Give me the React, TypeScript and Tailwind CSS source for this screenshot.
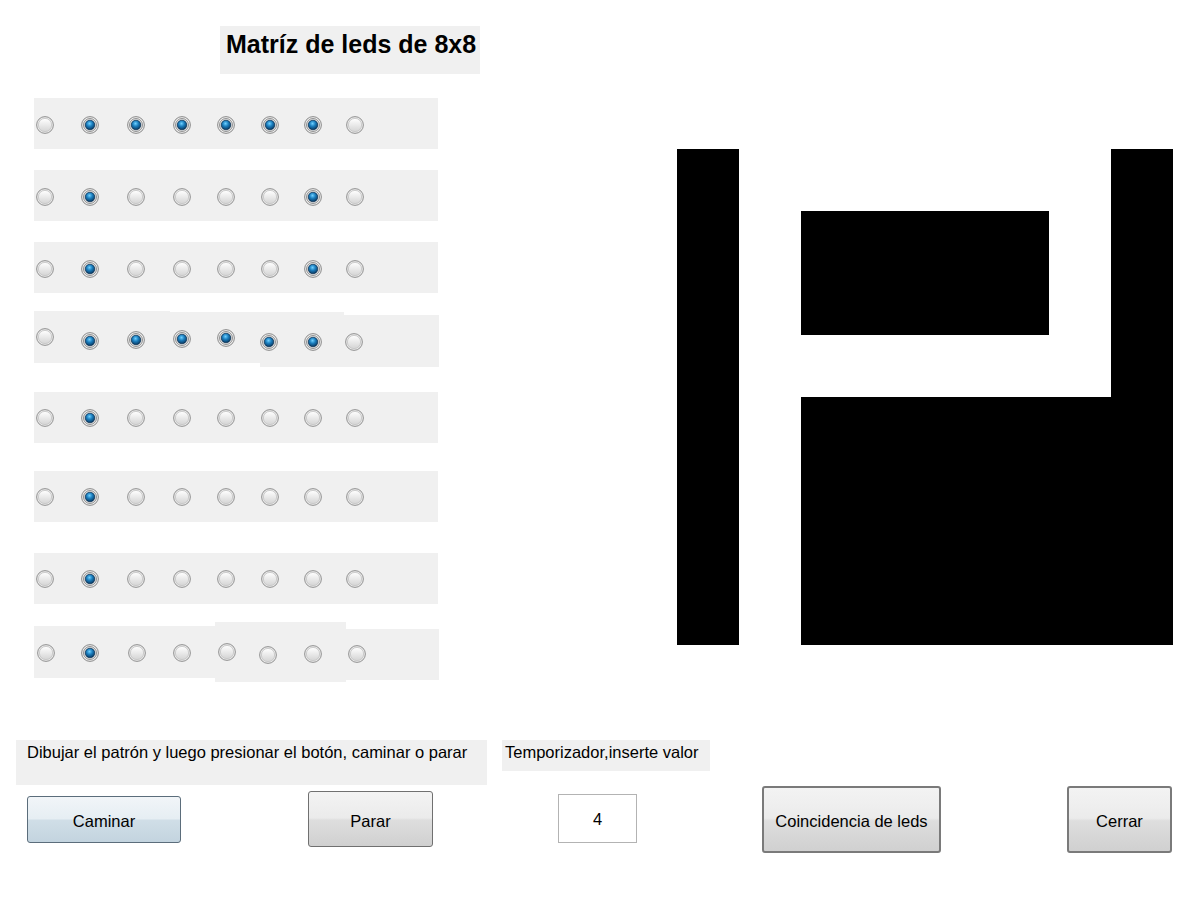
type Item = { on: boolean; cls: string }
type Seg = { cls: string; items: Item[] }
type RowDef = { cls: string; segs: Seg[] }

const stdMl = ["ml-[2px]", "ml-[27px]", "ml-[28px]", "ml-[28px]", "ml-[26px]", "ml-[26px]", "ml-[25px]", "ml-[24px]"]

const stdRow = (cls: string, pad: string, states: number[]): RowDef => ({
  cls,
  segs: [
    {
      cls: "w-[404px] h-[51px] " + pad,
      items: states.map((s, i) => ({ on: s === 1, cls: stdMl[i] })),
    },
  ],
})

const rows: RowDef[] = [
  stdRow("mt-[24px]", "pt-[18px]", [0, 1, 1, 1, 1, 1, 1, 0]),
  stdRow("mt-[21px]", "pt-[18px]", [0, 1, 0, 0, 0, 0, 1, 0]),
  stdRow("mt-[21px]", "pt-[18px]", [0, 1, 0, 0, 0, 0, 1, 0]),
  {
    cls: "mt-[18px]",
    segs: [
      {
        cls: "w-[136px] h-[52px]",
        items: [
          { on: false, cls: "ml-[2px] mt-[17px]" },
          { on: true, cls: "ml-[27px] mt-[21px]" },
          { on: true, cls: "ml-[28px] mt-[20px]" },
        ],
      },
      {
        cls: "w-[90px] h-[51px] mt-[1px]",
        items: [
          { on: true, cls: "ml-[3px] mt-[18px]" },
          { on: true, cls: "ml-[26px] mt-[17px]" },
        ],
      },
      {
        cls: "w-[84px] h-[55px] mt-[1px]",
        items: [
          { on: true, cls: "ml-0 mt-[21px]" },
          { on: true, cls: "ml-[26px] mt-[21px]" },
        ],
      },
      {
        cls: "w-[95px] h-[52px] mt-[4px]",
        items: [{ on: false, cls: "ml-[1px] mt-[18px]" }],
      },
    ],
  },
  stdRow("mt-[25px]", "pt-[17px]", [0, 1, 0, 0, 0, 0, 0, 0]),
  stdRow("mt-[28px]", "pt-[17px]", [0, 1, 0, 0, 0, 0, 0, 0]),
  stdRow("mt-[31px]", "pt-[17px]", [0, 1, 0, 0, 0, 0, 0, 0]),
  {
    cls: "mt-[18px]",
    segs: [
      {
        cls: "w-[181px] h-[52px] mt-[4px]",
        items: [
          { on: false, cls: "ml-[3px] mt-[18px]" },
          { on: true, cls: "ml-[26px] mt-[18px]" },
          { on: false, cls: "ml-[29px] mt-[18px]" },
          { on: false, cls: "ml-[27px] mt-[18px]" },
        ],
      },
      {
        cls: "w-[131px] h-[60px]",
        items: [
          { on: false, cls: "ml-[3px] mt-[21px]" },
          { on: false, cls: "ml-[23px] mt-[24px]" },
          { on: false, cls: "ml-[27px] mt-[23px]" },
        ],
      },
      {
        cls: "w-[93px] h-[51px] mt-[7px]",
        items: [{ on: false, cls: "ml-[2px] mt-[16px]" }],
      },
    ],
  },
]

// patrón que se ve en la matriz de la derecha
const pattern = [
  [1, 0, 0, 0, 0, 0, 0, 1],
  [1, 0, 1, 1, 1, 1, 0, 1],
  [1, 0, 1, 1, 1, 1, 0, 1],
  [1, 0, 0, 0, 0, 0, 0, 1],
  [1, 0, 1, 1, 1, 1, 1, 1],
  [1, 0, 1, 1, 1, 1, 1, 1],
  [1, 0, 1, 1, 1, 1, 1, 1],
  [1, 0, 1, 1, 1, 1, 1, 1],
]

const Radio = ({ on, className }: { on: boolean; className: string }) => (
  <svg width="18" height="18" viewBox="0 0 18 18" className={"shrink-0 " + className}>
    <defs>
      <linearGradient id="rOff" x1="0" y1="0" x2="0" y2="1">
        <stop offset="0" stopColor="#ffffff" />
        <stop offset="1" stopColor="#d4d4d4" />
      </linearGradient>
      <radialGradient id="rOn" cx="0.45" cy="0.35" r="0.65">
        <stop offset="0" stopColor="#6fd0ff" />
        <stop offset="0.45" stopColor="#1b7fbf" />
        <stop offset="1" stopColor="#08365e" />
      </radialGradient>
    </defs>
    {on ? (
      <>
        <circle cx="9" cy="9" r="8.4" fill="#eaeaea" stroke="#8c8c8c" strokeWidth="1" />
        <circle cx="9" cy="9" r="6.4" fill="#f5f5f5" stroke="#7a7a7a" strokeWidth="0.9" />
        <circle cx="9" cy="9" r="4.8" fill="url(#rOn)" stroke="#062a4a" strokeWidth="0.7" />
      </>
    ) : (
      <>
        <circle cx="9" cy="9" r="8.4" fill="#e6e6e6" stroke="#949494" strokeWidth="1" />
        <circle cx="9" cy="9" r="6.6" fill="url(#rOff)" stroke="#c4c4c4" strokeWidth="0.8" />
      </>
    )}
  </svg>
)

const App = () => {
  return (
    <div className="w-[1200px] h-[900px] bg-white text-black overflow-hidden font-['Liberation_Sans',Arial,sans-serif]">
      <div className="flex items-start">
        {/* columna izquierda: título y radios */}
        <div className="w-[480px] flex flex-col">
          <div className="ml-[220px] mt-[26px] w-[260px] h-[48px] bg-[#f0f0f0] pl-[6px] pt-[6px] text-[25px] leading-[25px] font-bold whitespace-nowrap">
            Matríz de leds de 8x8
          </div>
          {rows.map((r, ri) => (
            <div key={ri} className={"ml-[34px] flex items-start " + r.cls}>
              {r.segs.map((s, si) => (
                <div key={si} className={"flex items-start bg-[#f0f0f0] " + s.cls}>
                  {s.items.map((it, ii) => (
                    <Radio key={ii} on={it.on} className={it.cls} />
                  ))}
                </div>
              ))}
            </div>
          ))}
        </div>

        {/* matriz 8x8 */}
        <div className="ml-[197px] mt-[149px] grid grid-cols-8 w-[496px]">
          {pattern.flat().map((c, i) => (
            <div key={i} className={c ? "h-[62px] bg-black" : "h-[62px] bg-white"} />
          ))}
        </div>
      </div>

      {/* parte de abajo */}
      <div className="mt-[58px] flex items-start text-[16.5px] leading-[18px]">
        <div className="ml-[16px] w-[471px] h-[45px] bg-[#f0f0f0] pl-[11px] pt-[3px] whitespace-nowrap">
          Dibujar el patrón y luego presionar el botón, caminar o parar
        </div>
        <div className="ml-[15px] w-[208px] h-[31px] bg-[#f0f0f0] pl-[3px] pt-[3px] whitespace-nowrap">
          Temporizador,inserte valor
        </div>
      </div>
      <div className="mt-[1px] flex items-start text-[16.5px] leading-[18px]">
        <button className="ml-[27px] mt-[10px] w-[154px] h-[47px] pt-[3px] rounded-[3px] border border-[#5b6d7b] bg-[linear-gradient(to_bottom,#f1f5f8_0%,#e6eef3_48%,#d0dee7_52%,#c3d4df_100%)] flex items-center justify-center">
          Caminar
        </button>
        <button className="ml-[127px] mt-[5px] w-[125px] h-[56px] pt-[3px] rounded-[3px] border border-[#707070] bg-[linear-gradient(to_bottom,#f3f3f3_0%,#ebebeb_48%,#dedede_52%,#d0d0d0_100%)] flex items-center justify-center">
          Parar
        </button>
        <div className="ml-[125px] mt-[8px] w-[79px] h-[49px] border border-[#b3b3b3] bg-white flex items-center justify-center">
          4
        </div>
        <button className="ml-[125px] w-[179px] h-[67px] pt-[3px] rounded-[3px] border-2 border-[#7a7a7a] bg-[linear-gradient(to_bottom,#f3f3f3_0%,#ebebeb_48%,#dedede_52%,#d0d0d0_100%)] flex items-center justify-center whitespace-nowrap">
          Coincidencia de leds
        </button>
        <button className="ml-[126px] w-[105px] h-[67px] pt-[3px] rounded-[3px] border-2 border-[#7a7a7a] bg-[linear-gradient(to_bottom,#f3f3f3_0%,#ebebeb_48%,#dedede_52%,#d0d0d0_100%)] flex items-center justify-center">
          Cerrar
        </button>
      </div>
    </div>
  )
}

export default App
